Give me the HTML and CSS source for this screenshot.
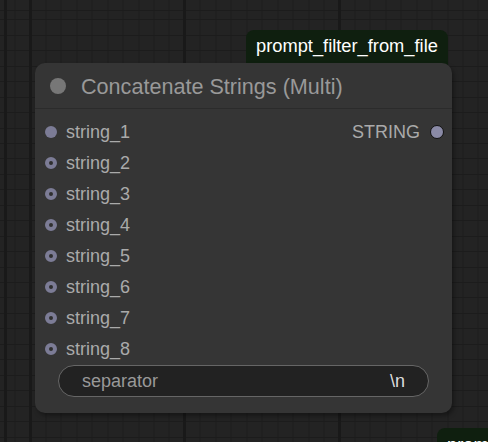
FILE: index.html
```html
<!DOCTYPE html>
<html>
<head>
<meta charset="utf-8">
<link rel="stylesheet" href="styles.css">
</head>
<body>
<div class="canvas">
  <div class="tag tag-top">prompt_filter_from_file</div>
  <div class="node">
    <div class="node-title">
      <span class="title-dot"></span>
      <span class="title-text">Concatenate Strings (Multi)</span>
    </div>
    <div class="node-body">
      <div class="slots">
        <div class="inputs">
          <div class="slot"><span class="dot dot-filled"></span><span class="slot-label">string_1</span></div>
          <div class="slot"><span class="dot dot-ring"></span><span class="slot-label">string_2</span></div>
          <div class="slot"><span class="dot dot-ring"></span><span class="slot-label">string_3</span></div>
          <div class="slot"><span class="dot dot-ring"></span><span class="slot-label">string_4</span></div>
          <div class="slot"><span class="dot dot-ring"></span><span class="slot-label">string_5</span></div>
          <div class="slot"><span class="dot dot-ring"></span><span class="slot-label">string_6</span></div>
          <div class="slot"><span class="dot dot-ring"></span><span class="slot-label">string_7</span></div>
          <div class="slot"><span class="dot dot-ring"></span><span class="slot-label">string_8</span></div>
        </div>
        <div class="outputs">
          <div class="slot slot-out"><span class="slot-label">STRING</span><span class="dot dot-out"></span></div>
        </div>
      </div>
      <div class="widget">
        <span class="widget-label">separator</span>
        <span class="widget-value">\n</span>
      </div>
    </div>
  </div>
  <div class="tag tag-bottom">prompt_filter_from_file</div>
</div>
</body>
</html>
```

FILE: styles.css
```css
html, body {
  margin: 0;
  padding: 0;
}
body {
  width: 488px;
  height: 442px;
  overflow: hidden;
  font-family: "Liberation Sans", Arial, sans-serif;
  background-color: #232323;
  background-image:
    repeating-linear-gradient(90deg, #191919 0 3px, transparent 3px 154.5px),
    repeating-linear-gradient(90deg, #1c1c1c 0 1px, transparent 1px 15.45px),
    repeating-linear-gradient(0deg, #1c1c1c 0 1px, transparent 1px 15.45px);
  background-position: 29px 0, 14.5px 0, 0 11px;
}
.canvas {
  position: relative;
  width: 488px;
  height: 442px;
  overflow: hidden;
}
.tag {
  position: absolute;
  background: #0f1f0f;
  color: #ffffff;
  font-size: 18.3px;
  border-radius: 8px 8px 0 0;
  box-sizing: border-box;
  padding: 0 10px;
  line-height: 31px;
  white-space: nowrap;
  overflow: hidden;
}
.tag-top {
  left: 246px;
  top: 30px;
  width: 202px;
  height: 40px;
}
.tag-bottom {
  left: 437px;
  top: 428px;
  width: 51px;
  height: 14px;
  padding-right: 0;
  line-height: 34px;
  border-radius: 8px 0 0 0;
}
.node {
  position: absolute;
  left: 35px;
  top: 63px;
  width: 417px;
  height: 350px;
  background: #353535;
  border-radius: 10px;
  box-shadow: 2px 3px 4px rgba(0, 0, 0, 0.35);
  display: flex;
  flex-direction: column;
}
.node-title {
  height: 46px;
  border-bottom: 1px solid #2b2b2b;
  display: flex;
  align-items: center;
  padding-left: 15px;
  gap: 16px;
  box-sizing: border-box;
}
.title-dot {
  width: 16px;
  height: 16px;
  border-radius: 50%;
  background: #777777;
  flex: none;
}
.title-text {
  color: #999999;
  font-size: 21.6px;
  line-height: 24px;
  margin-top: 2px;
  margin-left: -1px;
}
.node-body {
  padding-top: 7px;
  display: flex;
  flex-direction: column;
}
.slots {
  display: flex;
  justify-content: space-between;
}
.inputs, .outputs {
  display: flex;
  flex-direction: column;
}
.slot {
  height: 31px;
  display: flex;
  align-items: center;
  gap: 9px;
  padding-left: 10px;
}
.slot-out {
  padding-left: 0;
  padding-right: 8px;
  gap: 10px;
}
.slot-label {
  color: #aaaaaa;
  font-size: 18px;
  line-height: 20px;
}
.dot {
  width: 12px;
  height: 12px;
  border-radius: 50%;
  box-sizing: border-box;
  flex: none;
}
.dot-filled {
  background: #7c7c96;
}
.dot-ring {
  border: 4px solid #7c7c96;
  background: #2f2f2f;
}
.dot-out {
  width: 14px;
  height: 14px;
  background: #8a8aa6;
  border: 1.5px solid #111111;
}
.widget {
  margin: 1px 23px 0 23px;
  height: 32px;
  box-sizing: border-box;
  border: 1px solid #666666;
  border-radius: 16px;
  background: #222222;
  display: flex;
  align-items: center;
  justify-content: space-between;
  padding: 0 23px 0 23px;
  font-size: 18px;
}
.widget-label {
  color: #999999;
}
.widget-value {
  color: #dddddd;
}
```
